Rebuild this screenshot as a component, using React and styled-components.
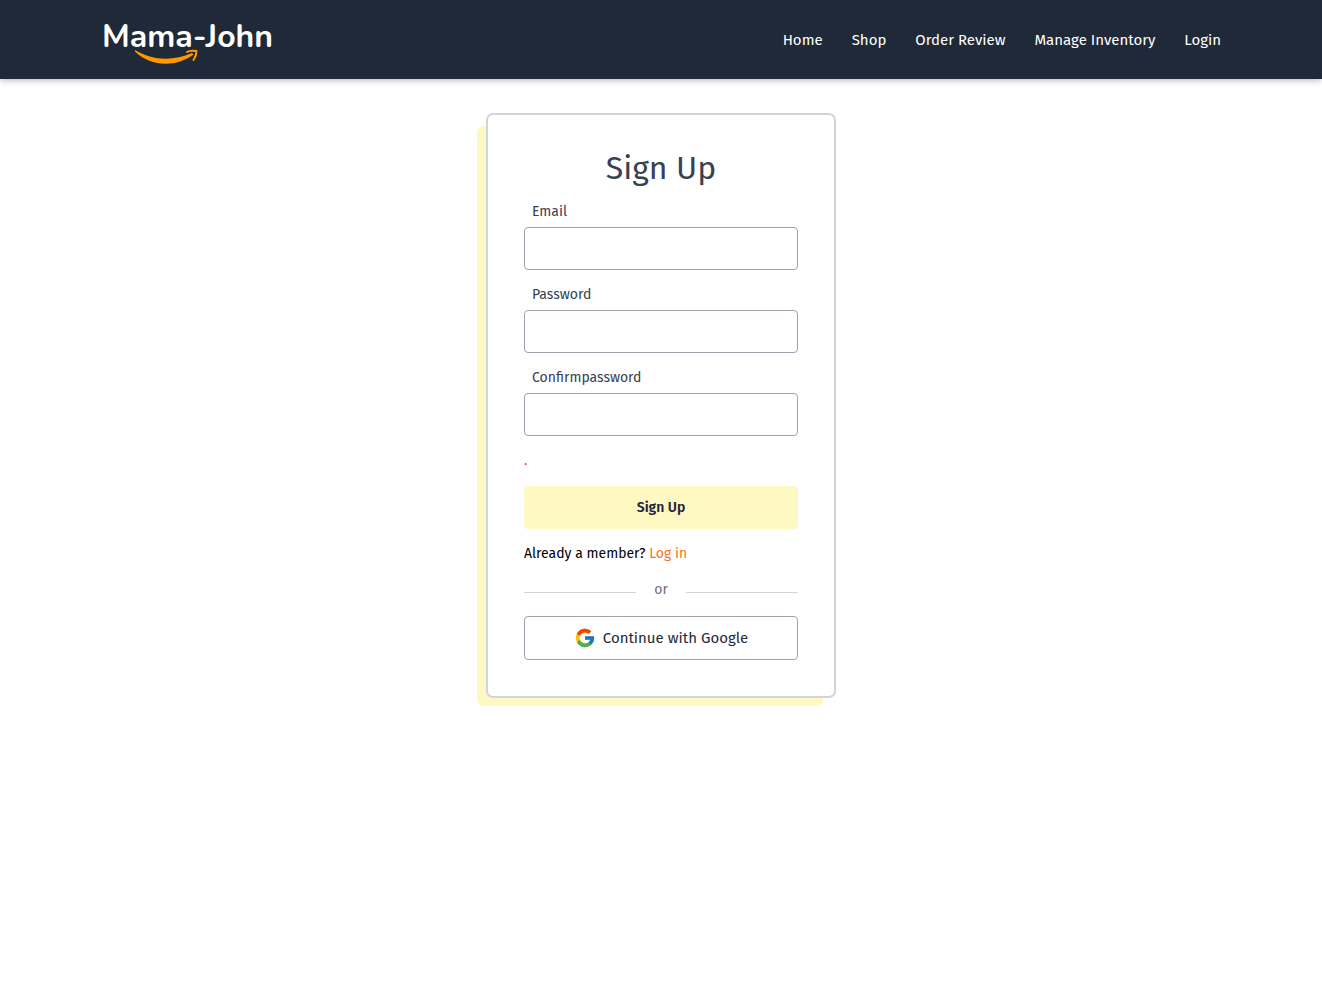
import React, { Component } from 'react';
import styled, { createGlobalStyle } from 'styled-components';
import { FcGoogle } from 'react-icons/fc';

const GlobalStyle = createGlobalStyle`
  * {
    box-sizing: border-box;
  }

  body {
    margin: 0;
    background: #fff;
    color: #000;
    font-family: 'Fira Sans', 'Noto Sans', sans-serif;
    font-size: 14px;
    line-height: 20px;
  }
`;

const Header = styled.header`
  display: flex;
  align-items: center;
  justify-content: space-between;
  min-height: 79px;
  padding: 0 101px;
  background: #1f2937;
  box-shadow: 0 1px 7px rgba(0, 0, 0, 0.3);
`;

const Logo = styled.a`
  display: block;
  line-height: 0;
`;

const LogoText = styled.text`
  fill: #fff;
  font-family: Nunito, Lato, sans-serif;
  font-size: 32px;
  font-weight: 700;
`;

const Nav = styled.nav`
  display: flex;
  gap: 29px;
`;

const NavLink = styled.a`
  color: #fff;
  font-size: 15px;
  text-decoration: none;
`;

const Main = styled.main`
  display: flex;
  justify-content: center;
  padding: 34px 16px;
`;

const CardWrap = styled.div`
  position: relative;
  width: 100%;
  max-width: 350px;
`;

const CardShade = styled.div`
  position: absolute;
  top: 13px;
  right: 13px;
  bottom: -8px;
  left: -9px;
  border-radius: 7px;
  background: #fef9c3;
`;

const Card = styled.div`
  position: relative;
  display: flex;
  flex-direction: column;
  gap: 15px;
  padding: 36px;
  border: 2px solid #d1d5db;
  border-radius: 7px;
  background: #fff;
`;

const Title = styled.h1`
  margin: 0 0 2px;
  color: #374151;
  font-size: 32px;
  font-weight: 400;
  line-height: 34px;
  text-align: center;
`;

const Form = styled.form`
  display: flex;
  flex-direction: column;
  gap: 15px;
`;

const Field = styled.div`
  display: flex;
  flex-direction: column;
  gap: 5px;
`;

const Label = styled.label`
  padding-left: 8px;
  color: #374151;
`;

const Input = styled.input`
  width: 100%;
  height: 43px;
  padding: 0 14px;
  border: 1px solid #9ca3af;
  border-radius: 4px;
  background: #fff;
  font: inherit;
`;

const ErrorText = styled.p`
  margin: 0;
  color: #ef4444;
`;

const Button = styled.button`
  display: flex;
  align-items: center;
  justify-content: center;
  gap: 7px;
  width: 100%;
  height: ${props => (props.$outlined ? '44px' : '43px')};
  padding: 0;
  border: ${props => (props.$outlined ? '1px solid #9ca3af' : 'none')};
  border-radius: 4px;
  background: ${props => (props.$outlined ? '#fff' : '#fef9c3')};
  color: #1f2937;
  font-family: inherit;
  font-size: ${props => (props.$outlined ? '15px' : '14px')};
  font-weight: ${props => (props.$outlined ? 400 : 600)};
  cursor: pointer;
`;

const Member = styled.p`
  margin: 0;
`;

const MemberLink = styled.a`
  color: #f97316;
  text-decoration: none;
`;

const Divider = styled.div`
  display: flex;
  align-items: center;
  gap: 18px;
  color: #6b7280;
  line-height: 22px;
`;

const Line = styled.span`
  flex: 1;
  height: 1px;
  margin-top: 4px;
  background: #d1d5db;
`;

const links = ['Home', 'Shop', 'Order Review', 'Manage Inventory', 'Login'];

const fields = [
  { id: 'email', label: 'Email', type: 'email' },
  { id: 'password', label: 'Password', type: 'password' },
  { id: 'confirm-password', label: 'Confirmpassword', type: 'password' },
];

class App extends Component {
  render() {
    return (
      <>
        <GlobalStyle />
        <Header>
          <Logo href="#home" aria-label="Mama-John">
            <svg width="180" height="49" viewBox="0 0 180 49">
              <LogoText x="1" y="32">Mama-John</LogoText>
              <path
                d="M34 35 C51 45.500 72 46.500 91 38 L92.500 39.500 C75 52.500 50 52 34 36.500 Z"
                fill="#ff9900"
              />
              <path
                d="M86 37 C88 35.500 92 35.500 95.500 36 C95.500 39 94.500 42 92.500 45"
                fill="none"
                stroke="#ff9900"
                strokeWidth="2"
                strokeLinecap="round"
                strokeLinejoin="round"
              />
            </svg>
          </Logo>
          <Nav>
            {links.map(link => (
              <NavLink key={link} href="#">{link}</NavLink>
            ))}
          </Nav>
        </Header>
        <Main>
          <CardWrap>
            <CardShade />
            <Card>
              <Title>Sign Up</Title>
              <Form onSubmit={e => e.preventDefault()}>
                {fields.map(({ id, label, type }) => (
                  <Field key={id}>
                    <Label htmlFor={id}>{label}</Label>
                    <Input id={id} name={id} type={type} />
                  </Field>
                ))}
                <ErrorText>.</ErrorText>
                <Button type="submit">Sign Up</Button>
              </Form>
              <Member>
                Already a member? <MemberLink href="#login">Log in</MemberLink>
              </Member>
              <Divider>
                <Line />
                or
                <Line />
              </Divider>
              <Button type="button" $outlined>
                <FcGoogle size={22} />
                Continue with Google
              </Button>
            </Card>
          </CardWrap>
        </Main>
      </>
    );
  }
}

export default App;
